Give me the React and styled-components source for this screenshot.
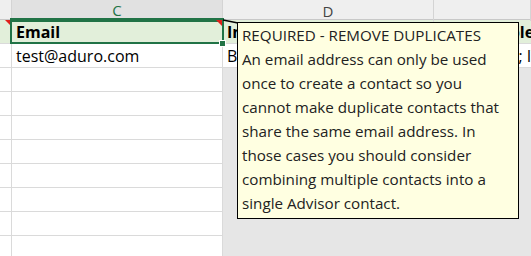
import styled, { createGlobalStyle, css } from 'styled-components';

const GlobalStyle = createGlobalStyle`
  html, body {
    margin: 0;
    padding: 0;
    background: #ffffff;
  }
`;

const COLS = '12px 211px 211px 1fr';
const GREEN = '#217346';

const Sheet = styled.div`
  position: relative;
  width: 531px;
  height: 256px;
  overflow: hidden;
  background: #ffffff;
  font-family: 'Open Sans', 'Noto Sans', sans-serif;
`;

const HeaderRow = styled.div`
  display: grid;
  grid-template-columns: ${COLS};
  height: 20px;
  background: #efefef;
  border-bottom: 1px solid #c8c8c8;
  box-sizing: border-box;
`;

const HeaderCell = styled.div`
  display: flex;
  align-items: center;
  justify-content: center;
  border-right: 1px solid #d4d4d4;
  font-size: 15px;
  color: #444444;
  ${({ $selected }) =>
    $selected &&
    css`
      background: #e1e1e1;
      color: ${GREEN};
      border-bottom: 2px solid ${GREEN};
      margin-bottom: -1px;
    `}
`;

const Row = styled.div`
  display: grid;
  grid-template-columns: ${COLS};
  height: 24px;
  background: ${({ $fill }) => $fill || '#ffffff'};
`;

const Cell = styled.div`
  position: relative;
  display: flex;
  align-items: center;
  padding: 0 4px 0 ${({ $indent }) => $indent ?? 4}px;
  box-sizing: border-box;
  border-right: 1px solid #dadada;
  border-bottom: 1px solid #dadada;
  font-size: 16px;
  color: #000000;
  white-space: nowrap;
  overflow: ${({ $open }) => ($open ? 'visible' : 'hidden')};
  font-weight: ${({ $bold }) => ($bold ? 700 : 400)};
  ${({ $shade }) =>
    $shade &&
    css`
      background: #e6e6e6;
      border-color: #e6e6e6;
    `}
  ${({ $note }) =>
    $note &&
    css`
      &::before {
        content: '';
        position: absolute;
        top: 0;
        right: 0;
        border-top: 6px solid #e0201b;
        border-left: 6px solid transparent;
        z-index: 2;
      }
    `}
`;

const Selection = styled.div`
  position: absolute;
  left: -2px;
  top: -2px;
  right: -2px;
  bottom: -1px;
  border: 2px solid ${GREEN};
  pointer-events: none;
  z-index: 3;
`;

const FillHandle = styled.div`
  position: absolute;
  right: -4px;
  bottom: -4px;
  width: 5px;
  height: 5px;
  background: ${GREEN};
  border: 1px solid #ffffff;
  z-index: 4;
`;

const Comment = styled.div`
  position: absolute;
  left: 237px;
  top: 22px;
  width: 282px;
  height: 197px;
  box-sizing: border-box;
  padding: 0 4px;
  background: #ffffe1;
  border: 1px solid #000000;
  color: #222222;
  font-family: 'Open Sans', 'Noto Sans', sans-serif;
  font-size: 15.2px;
  line-height: 24px;
  white-space: pre-line;
  z-index: 5;
`;

const Connector = styled.svg`
  position: absolute;
  left: 222px;
  top: 19px;
  z-index: 4;
`;

const noteText = `REQUIRED - REMOVE DUPLICATES
An email address can only be used
once to create a contact so you
cannot make duplicate contacts that
share the same email address. In
those cases you should consider
combining multiple contacts into a
single Advisor contact.`;

const EMPTY_ROWS = 8;

const App = () => {
  return (
    <Sheet>
      <GlobalStyle />
      <HeaderRow>
        <HeaderCell />
        <HeaderCell $selected>C</HeaderCell>
        <HeaderCell>D</HeaderCell>
        <HeaderCell />
      </HeaderRow>

      <Row $fill="#e2efda">
        <Cell $note />
        <Cell $bold $note $open>
          Email
          <Selection />
          <FillHandle />
        </Cell>
        <Cell $bold>Industry</Cell>
        <Cell $bold $open>Set Multiple</Cell>
      </Row>

      <Row>
        <Cell />
        <Cell>test@aduro.com</Cell>
        <Cell>Business</Cell>
        <Cell $open $indent={1}>Operations; IT</Cell>
      </Row>

      {Array.from({ length: EMPTY_ROWS }).map((_, i) => (
        <Row key={i}>
          <Cell />
          <Cell />
          <Cell $shade />
          <Cell $shade />
        </Row>
      ))}

      <Connector width="16" height="5" viewBox="0 0 16 5">
        <line x1="1" y1="1" x2="16" y2="4" stroke="#000" strokeWidth="1.5" />
      </Connector>
      <Comment>{noteText}</Comment>
    </Sheet>
  );
};

export default App;
